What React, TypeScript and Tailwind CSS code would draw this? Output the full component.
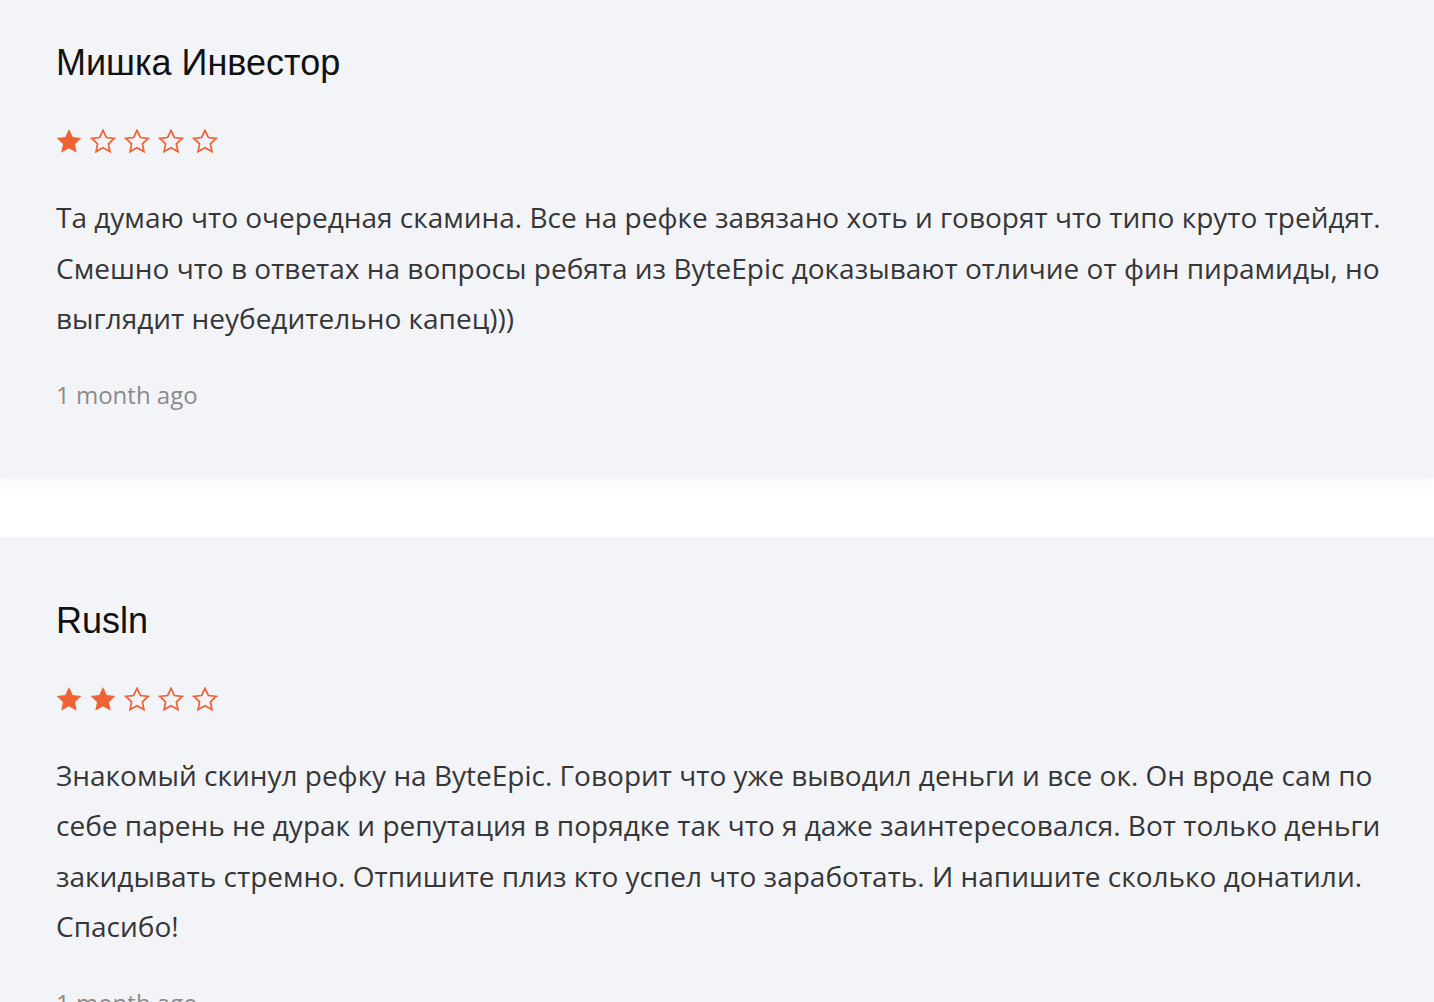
import React from "react";

const reviews = [
  {
    name: "Мишка Инвестор",
    rating: 1,
    text: "Та думаю что очередная скамина. Все на рефке завязано хоть и говорят что типо круто трейдят. Смешно что в ответах на вопросы ребята из ByteEpic доказывают отличие от фин пирамиды, но выглядит неубедительно капец)))",
    date: "1 month ago",
  },
  {
    name: "Rusln",
    rating: 2,
    text: "Знакомый скинул рефку на ByteEpic. Говорит что уже выводил деньги и все ок. Он вроде сам по себе парень не дурак и репутация в порядке так что я даже заинтересовался. Вот только деньги закидывать стремно. Отпишите плиз кто успел что заработать. И напишите сколько донатили. Спасибо!",
    date: "1 month ago",
  },
];

function Star({ filled }: { filled: boolean }) {
  return (
    <svg width="26" height="25" viewBox="0 0 24 23" className="block">
      <path
        d="M12 1.2l3.1 6.6 7.2.9-5.3 5 1.4 7.1L12 17.3l-6.4 3.5 1.4-7.1-5.3-5 7.2-.9z"
        fill={filled ? "#ee6234" : "none"}
        stroke="#ee6234"
        strokeWidth={filled ? 1 : 1.6}
        strokeLinejoin="miter"
      />
    </svg>
  );
}

export default function App() {
  return (
    <div className="min-h-screen bg-white overflow-hidden">
      <div className="-mt-[21px] flex flex-col gap-[59px]">
        {reviews.map((r) => (
          <div
            key={r.name}
            className="bg-[#f3f4f8] pl-14 pr-10 pt-[62px] pb-[68px] shadow-[0_6px_14px_rgba(0,0,0,0.04)]"
          >
            <div className="font-['Liberation_Sans',Arial,sans-serif] text-[36px] leading-[44px] text-[#111]">
              {r.name}
            </div>
            <div className="mt-[44px] flex gap-2">
              {[1, 2, 3, 4, 5].map((i) => (
                <Star key={i} filled={i <= r.rating} />
              ))}
            </div>
            <p className="mt-[38px] font-['Open_Sans',sans-serif] text-[28px] leading-[50.5px] text-[#363636]">
              {r.text}
            </p>
            <div className="mt-[36px] font-['Open_Sans',sans-serif] text-[24px] leading-[30px] text-[#8b8b8b]">
              {r.date}
            </div>
          </div>
        ))}
      </div>
    </div>
  );
}
